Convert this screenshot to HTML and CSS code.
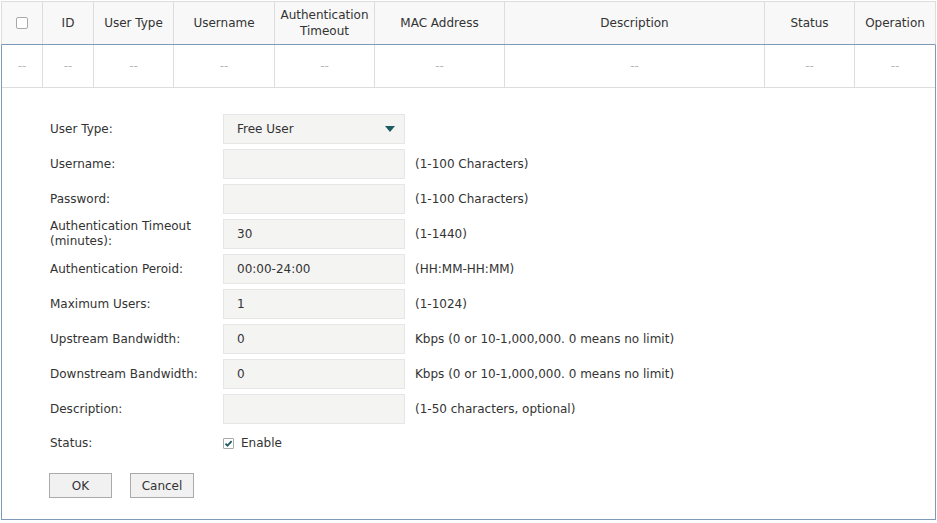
FILE: index.html
```html
<!DOCTYPE html>
<html>
<head>
<meta charset="utf-8">
<link rel="stylesheet" href="styles.css">
</head>
<body>
<div class="panel">
  <div class="grid head">
    <div class="cell"><span class="hcb"></span></div>
    <div class="cell">ID</div>
    <div class="cell">User Type</div>
    <div class="cell">Username</div>
    <div class="cell">Authentication<br>Timeout</div>
    <div class="cell">MAC Address</div>
    <div class="cell">Description</div>
    <div class="cell">Status</div>
    <div class="cell">Operation</div>
  </div>
  <div class="body">
    <div class="grid row">
      <div class="cell dash">--</div>
      <div class="cell dash">--</div>
      <div class="cell dash">--</div>
      <div class="cell dash">--</div>
      <div class="cell dash">--</div>
      <div class="cell dash">--</div>
      <div class="cell dash">--</div>
      <div class="cell dash">--</div>
      <div class="cell dash">--</div>
    </div>
    <form class="form">
      <div class="frow">
        <span class="lbl">User Type:</span>
        <div class="field select">Free User<span class="arrow"></span></div>
      </div>
      <div class="frow">
        <span class="lbl">Username:</span>
        <div class="field"></div>
        <span class="hint">(1-100 Characters)</span>
      </div>
      <div class="frow">
        <span class="lbl">Password:</span>
        <div class="field"></div>
        <span class="hint">(1-100 Characters)</span>
      </div>
      <div class="frow">
        <span class="lbl two">Authentication Timeout<br>(minutes):</span>
        <div class="field">30</div>
        <span class="hint">(1-1440)</span>
      </div>
      <div class="frow">
        <span class="lbl">Authentication Peroid:</span>
        <div class="field">00:00-24:00</div>
        <span class="hint">(HH:MM-HH:MM)</span>
      </div>
      <div class="frow">
        <span class="lbl">Maximum Users:</span>
        <div class="field">1</div>
        <span class="hint">(1-1024)</span>
      </div>
      <div class="frow">
        <span class="lbl">Upstream Bandwidth:</span>
        <div class="field">0</div>
        <span class="hint">Kbps (0 or 10-1,000,000. 0 means no limit)</span>
      </div>
      <div class="frow">
        <span class="lbl">Downstream Bandwidth:</span>
        <div class="field">0</div>
        <span class="hint">Kbps (0 or 10-1,000,000. 0 means no limit)</span>
      </div>
      <div class="frow">
        <span class="lbl">Description:</span>
        <div class="field"></div>
        <span class="hint">(1-50 characters, optional)</span>
      </div>
      <div class="frow status">
        <span class="lbl">Status:</span>
        <span class="chk"><span class="cbox"><svg viewBox="0 0 11 11" width="11" height="11"><path d="M2.5 5.6 L4.5 7.6 L8.6 3.2" fill="none" stroke="#1d5c63" stroke-width="1.8"/></svg></span>Enable</span>
      </div>
      <div class="btns">
        <button type="button" class="btn ok">OK</button>
        <button type="button" class="btn cancel">Cancel</button>
      </div>
    </form>
  </div>
</div>
</body>
</html>
```
FILE: styles.css
```css
* { box-sizing: border-box; }
body {
  margin: 0;
  font-family: "DejaVu Sans", Verdana, sans-serif;
  font-size: 12px;
  color: #333;
  background: #fff;
}
.panel {
  width: 935px;
  margin: 1px 0 0 1px;
}
.grid {
  display: grid;
  grid-template-columns: 41px 51px 80px 101px 100px 130px 260px 90px 80px;
}
.head {
  border: 1px solid #dddddd;
  border-bottom: 1px solid #7d9bb8;
  background: #f8f8f8;
  height: 44px;
}
.cell {
  display: flex;
  align-items: center;
  justify-content: center;
  text-align: center;
  border-right: 1px solid #dddddd;
  line-height: 16px;
}
.grid .cell:last-child { border-right: none; }
.hcb {
  width: 12px;
  height: 12px;
  border: 1px solid #a9a9a9;
  border-radius: 2px;
  background: #fff;
}
.body {
  border-left: 1px solid #7d9bb8;
  border-right: 1px solid #7d9bb8;
  border-bottom: 1px solid #7d9bb8;
}
.row {
  height: 43px;
  border-bottom: 1px solid #dddddd;
}
.dash { color: #b8b8b8; }
.form {
  padding: 26px 0 21px 48px;
}
.frow {
  display: flex;
  align-items: center;
  height: 30px;
  margin-bottom: 5px;
}
.frow.status {
  height: 28px;
}
.lbl {
  width: 173px;
  flex: none;
  line-height: 15px;
}
.field {
  width: 182px;
  height: 30px;
  flex: none;
  background: #f4f4f3;
  border: 1px solid #e6e6e6;
  padding-left: 13px;
  display: flex;
  align-items: center;
  position: relative;
}
.arrow {
  position: absolute;
  right: 9px;
  top: 11px;
  width: 0;
  height: 0;
  border-left: 5px solid transparent;
  border-right: 5px solid transparent;
  border-top: 6px solid #1d5c63;
}
.hint { margin-left: 10px; }
.chk {
  display: flex;
  align-items: center;
}
.cbox {
  width: 11px;
  height: 11px;
  border: 1px solid #a9a9a9;
  border-radius: 1px;
  margin-right: 7px;
  display: flex;
  align-items: center;
  justify-content: center;
  background: #fff;
}
.cbox svg { display: block; margin: -1px; }
.btns {
  display: flex;
  gap: 18px;
  margin-top: 16px;
  margin-left: -1px;
}
.btn {
  height: 25px;
  border: 1px solid #aaaaaa;
  background: #f1f1f1;
  font-family: inherit;
  font-size: 12px;
  color: #333;
  padding: 0;
}
.ok { width: 63px; }
.cancel { width: 64px; }
```
